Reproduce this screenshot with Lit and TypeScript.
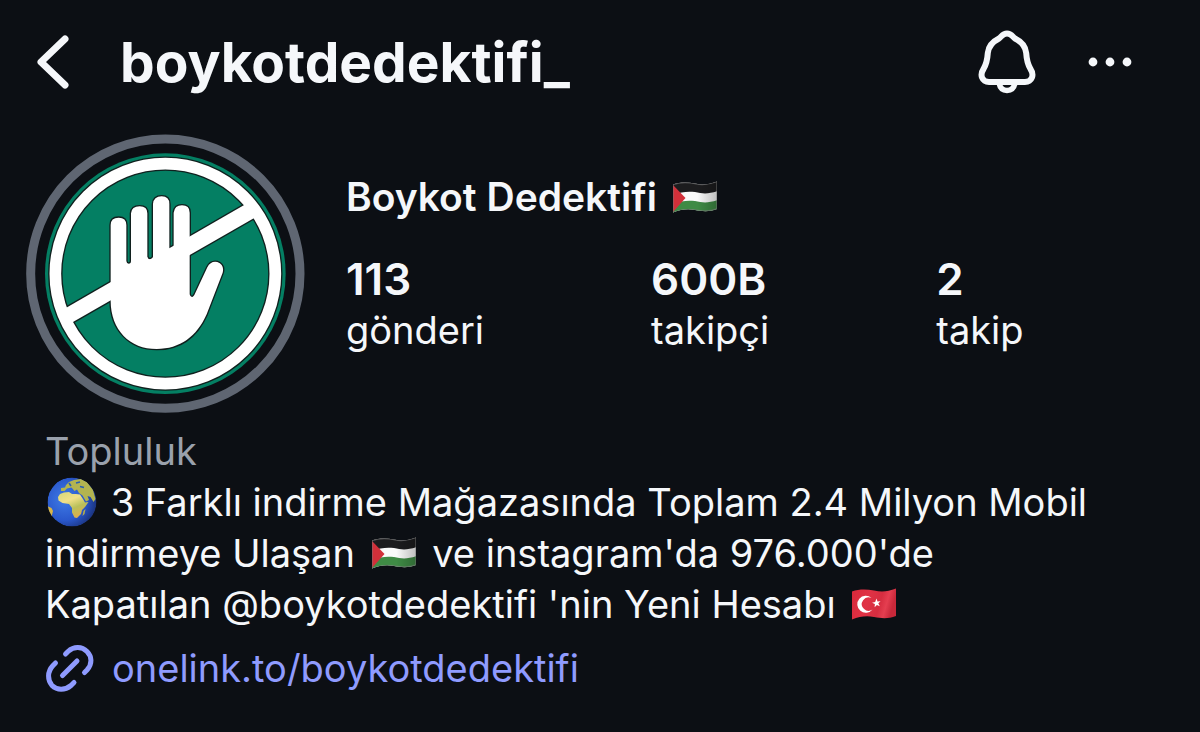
import { LitElement, html, css, svg } from "lit";
import { customElement } from "lit/decorators.js";

const stats = [
  { value: "113", label: "gönderi" },
  { value: "600B", label: "takipçi" },
  { value: "2", label: "takip" },
];

const WAVE = "M1 4.500C8 2 15 2 23 3.500C31 5.500 37 4.500 45 1.500V29C37 32 31 31.500 23 30C15 28.500 9 29.500 1 32.500Z";

const palestine = () => html`
  <svg class="flag" viewBox="0 0 46 34" role="img" aria-label="Filistin bayrağı">
    <defs>
      <clipPath id="ps"><path d=${WAVE} /></clipPath>
      <linearGradient id="ps-shade" x1="0" x2="1" y1="0" y2="0">
        <stop offset="0" stop-color="#fff" stop-opacity="0" />
        <stop offset="0.55" stop-color="#000" stop-opacity="0" />
        <stop offset="1" stop-color="#000" stop-opacity="0.25" />
      </linearGradient>
    </defs>
    <g clip-path="url(#ps)">
      <rect width="46" height="34" fill="#fafafa" />
      <path d="M0 0H46V11C37 14 31 14 23 12C15 11 9 12 0 15Z" fill="#1c1c1e" />
      <path d="M0 24C9 21 15 20 23 21C31 23 37 23 46 20V34H0Z" fill="#3f8b45" />
      <path d="M0 4L13.500 18L0 33Z" fill="#d2303a" />
      <rect width="46" height="34" fill="url(#ps-shade)" />
      <path d=${WAVE} fill="none" stroke="#777" stroke-opacity="0.6" stroke-width="1.500" />
    </g>
  </svg>
`;

const turkey = () => html`
  <svg class="flag" viewBox="0 0 46 34" role="img" aria-label="Türk bayrağı">
    <defs>
      <linearGradient id="tr" x1="0" x2="1" y1="0" y2="0.2">
        <stop offset="0" stop-color="#d8283a" />
        <stop offset="0.4" stop-color="#e03245" />
        <stop offset="0.7" stop-color="#d62d40" />
        <stop offset="0.85" stop-color="#e53e50" />
        <stop offset="1" stop-color="#c8283a" />
      </linearGradient>
    </defs>
    <path d=${WAVE} fill="url(#tr)" />
    <path d="M20.500 11A8.500 8.500 0 1 0 21.500 22.500A6.700 6.700 0 1 1 20.500 11Z" fill="#fff" />
    <path d="M25.500 11.500L26.500 14.500L29.600 14.200L27.300 16.300L28.800 19.200L25.900 18L23.600 20.300L23.900 17L21 15.700L24.200 14.900Z" fill="#fff" />
  </svg>
`;

const globe = () => html`
  <svg class="globe" viewBox="0 0 50 50" role="img" aria-label="Dünya">
    <defs>
      <radialGradient id="sea" cx="0.35" cy="0.45" r="0.65">
        <stop offset="0" stop-color="#3f7be6" />
        <stop offset="0.65" stop-color="#2a58cc" />
        <stop offset="1" stop-color="#1b3480" />
      </radialGradient>
      <linearGradient id="land" x1="0" x2="0.5" y1="0" y2="1">
        <stop offset="0" stop-color="#d5d67a" />
        <stop offset="0.4" stop-color="#f1e088" />
        <stop offset="0.7" stop-color="#b9c05a" />
        <stop offset="1" stop-color="#dcb04c" />
      </linearGradient>
      <clipPath id="disc"><circle cx="25" cy="25" r="24.500" /></clipPath>
    </defs>
    <g clip-path="url(#disc)">
      <circle cx="25" cy="25" r="24.500" fill="url(#sea)" />
      <path d="M13 17L17 15.500L22 15L25 17L29 17L33 17.500L36 22L38 25.500L41.500 25L38 30L35 33L34 37L30 41L27.500 40.500L25 35.500L25 31L22 27L15.500 26L11.500 23.500L11 20Z" fill="url(#land)" />
      <path d="M14 14L14 11L18 10.500L19 8L22 5L27 3L34 2L40 5L46 13L48.500 22L46.500 25L43.500 20L40.500 19L42 23L39 24.500L35.500 18.500L32 16L30 12.500L27.500 14L24.500 10.500L20 11.500L17.500 14Z" fill="#b3b450" />
      <path d="M36.500 34L38.500 32L37.500 37L35.500 39Z" fill="#b9b04a" />
      <path d="M0 29L4.500 31L6 34L4.500 40L1 36Z" fill="#d9b647" />
      <path d="M22 6L24 9M33 9.500L37 10.500M29 6L33 5" fill="none" stroke="#2a5fb0" stroke-width="1.600" />
    </g>
  </svg>
`;

/* The raised palm, the bar and the rim share one silhouette, outlined and then filled. */
const emblem = (cls: string) => svg`
  <g class=${cls}>
    <circle class="rim" cx="436" cy="431" r="330" />
    <path class="solid" d="M118 545L692 214L722 253L138 588Z" />
    <path class="solid" d="M272 512V285Q272 263 296 263Q319 263 319 285V393Q320 401 326 401Q333 401 333 393V250Q335 229 359 229Q382 229 382 250V380Q384 388 391 388Q398 388 399 380V222Q401 199 425 199Q448 199 448 222V356L461 351V248Q464 226 486 226Q509 226 509 248V493Q511 502 517 501Q520 500 523 495L562 412Q572 392 592 396Q614 405 608 428L560 553C530 620 480 657 410 657C330 657 272 600 272 512Z" />
  </g>
`;

@customElement("app-root")
export class AppRoot extends LitElement {
  static styles = css`
    :host {
      display: block;
      min-height: 100vh;
      box-sizing: border-box;
      background: #0c0f14;
      color: #f5f7fa;
      font-family: Inter, "Noto Sans", sans-serif;
      font-size: 38px;
      line-height: 51px;
    }
    .bar {
      display: flex;
      align-items: center;
      height: 124px;
      padding: 0 66px 0 32px;
    }
    button {
      display: flex;
      padding: 0;
      border: 0;
      background: none;
      color: inherit;
      cursor: pointer;
    }
    .title {
      flex: 1;
      margin: 0 0 0 48px;
      font-size: 55px;
      line-height: 68px;
      font-weight: 700;
    }
    .actions {
      display: flex;
      align-items: center;
      gap: 49px;
    }
    .line {
      fill: none;
      stroke: currentColor;
      stroke-linecap: round;
      stroke-linejoin: round;
    }
    .profile {
      display: flex;
      gap: 41px;
      padding: 10px 24px 0 25px;
    }
    .avatar {
      flex: none;
      width: 280px;
      height: 280px;
    }
    .ring {
      fill: none;
      stroke: #5f6672;
      stroke-width: 27;
    }
    .disc {
      fill: #047f63;
    }
    .rim {
      fill: none;
    }
    .outline .rim {
      stroke: #10201e;
      stroke-width: 43;
    }
    .outline .solid {
      stroke: #10201e;
      stroke-width: 8;
    }
    .fill .rim {
      stroke: #fff;
      stroke-width: 35;
    }
    .fill .solid {
      fill: #fff;
    }
    .info {
      padding-top: 37px;
    }
    .name {
      margin: 0;
      font-size: 39px;
      font-weight: 600;
    }
    .stats {
      display: flex;
      gap: 167px;
      margin: 32px 0 0;
    }
    .stat {
      display: flex;
      flex-direction: column;
    }
    .value {
      order: -1;
      margin: 0;
      font-size: 44px;
      font-weight: 600;
    }
    .bio {
      padding: 12px 45px 0;
    }
    p {
      margin: 0;
    }
    .category {
      color: #9aa1ac;
    }
    .flag {
      width: 46px;
      height: 34px;
      margin: 0 5px;
      vertical-align: -3px;
    }
    .globe {
      width: 50px;
      height: 50px;
      margin: 0 3px 0 2px;
      vertical-align: -11px;
    }
    .link {
      display: inline-flex;
      align-items: center;
      gap: 18px;
      margin-top: 13px;
      color: #8f9bff;
      text-decoration: none;
    }
  `;

  render() {
    return html`
      <header class="bar">
        <button aria-label="Geri">
          <svg width="40" height="60" viewBox="0 0 40 60">
            <path class="line" stroke-width="7" d="M33 8L9 31L33 54" transform="translate(0 -1)" />
          </svg>
        </button>
        <h1 class="title">boykotdedektifi_</h1>
        <div class="actions">
          <button aria-label="Bildirimler">
            <svg width="60" height="66" viewBox="0 0 60 66">
              <path class="line" stroke-width="6" d="M30 4.500C26 4.500 24.500 7.500 22 9.500C16 12.500 11.500 17 10.800 24C10.300 32 9.500 35 6.500 40C2.500 46 5 53 12 53H48C55 53 57.500 46 53.500 40C50.500 35 49.700 32 49.200 24C48.500 17 44 12.500 38 9.500C35.500 7.500 34 4.500 30 4.500Z" />
              <path class="line" stroke-width="5.500" d="M22 54C23 59 26 61.500 30 61.500S37 59 38 54" />
            </svg>
          </button>
          <button aria-label="Diğer seçenekler">
            <svg width="48" height="48" viewBox="0 0 48 48" fill="currentColor">
              <circle cx="7" cy="24" r="4.400" />
              <circle cx="24" cy="24" r="4.400" />
              <circle cx="41" cy="24" r="4.400" />
            </svg>
          </button>
        </div>
      </header>
      <section class="profile">
        <svg class="avatar" viewBox="15 12 840 840" role="img" aria-label="Profil fotoğrafı">
          <circle class="ring" cx="436" cy="431" r="404" />
          <circle class="disc" cx="436" cy="431" r="361" />
          ${emblem("outline")} ${emblem("fill")}
        </svg>
        <div class="info">
          <h2 class="name">Boykot Dedektifi ${palestine()}</h2>
          <dl class="stats">
            ${stats.map(
              (s) => html`<div class="stat"><dt>${s.label}</dt><dd class="value">${s.value}</dd></div>`
            )}
          </dl>
        </div>
      </section>
      <section class="bio">
        <p class="category">Topluluk</p>
        <p>
          ${globe()} 3 Farklı indirme Mağazasında Toplam 2.4 Milyon Mobil<br />
          indirmeye Ulaşan ${palestine()} ve instagram'da 976.000'de<br />
          Kapatılan @boykotdedektifi 'nin Yeni Hesabı ${turkey()}
        </p>
        <a class="link" href="https://onelink.to/boykotdedektifi">
          <svg width="49" height="49" viewBox="0 0 49 49">
            <path class="line" stroke-width="5" d="M20.500 10L23 7.500C29 2 37 2.500 42 7.500C47 12.500 47.500 20 42 26L39.500 28.500M10.500 19L8 21.500C2 28 2.500 36 7 41.500C12 46.500 20 46.500 26 41.500L29 38.500M17.500 31.500L32 17" />
          </svg>
          <span>onelink.to/boykotdedektifi</span>
        </a>
      </section>
    `;
  }
}
